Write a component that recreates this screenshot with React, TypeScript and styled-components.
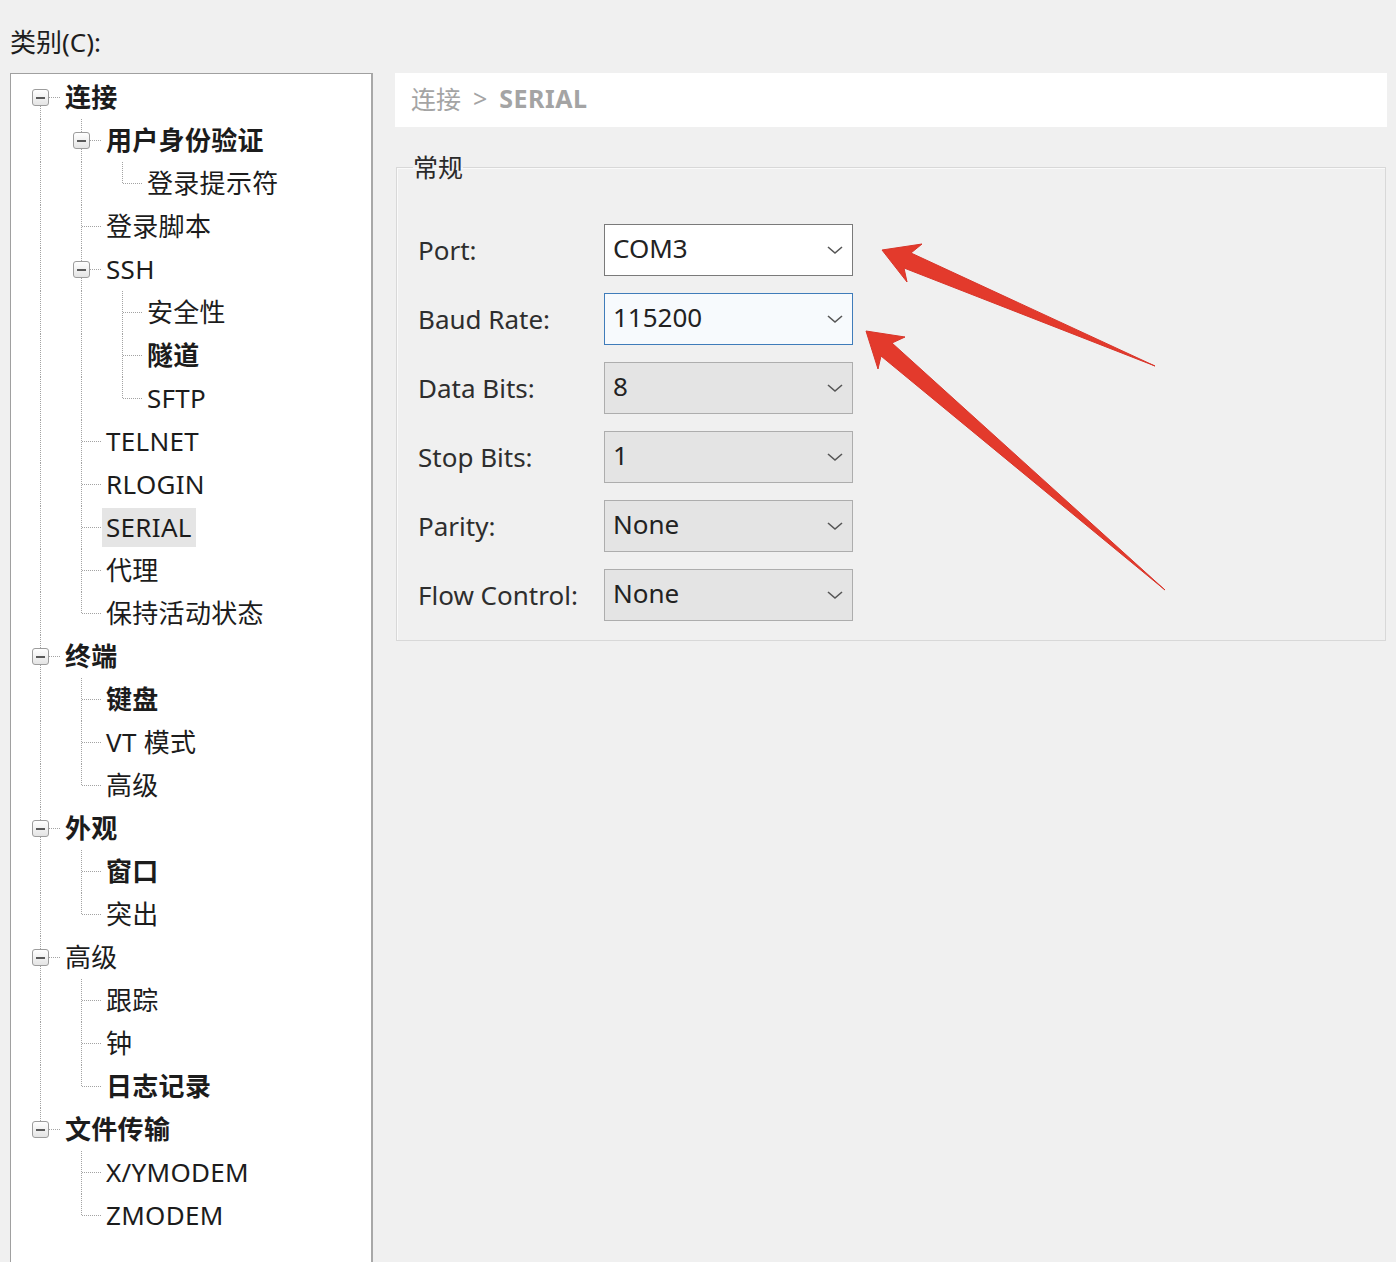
import React from "react";
import styled, { createGlobalStyle, css } from "styled-components";

const GlobalStyle = createGlobalStyle`
  html, body {
    margin: 0;
    padding: 0;
    overflow: hidden;
    background: #f0f0f0;
  }
  body {
    font-family: "Noto Sans", "Noto Sans CJK SC", sans-serif;
    color: #222;
  }
`;

type TreeNode = {
  label: string;
  bold?: boolean;
  selected?: boolean;
  children?: TreeNode[];
};

const TREE: TreeNode[] = [
  {
    label: "连接",
    bold: true,
    children: [
      { label: "用户身份验证", bold: true, children: [{ label: "登录提示符" }] },
      { label: "登录脚本" },
      {
        label: "SSH",
        children: [{ label: "安全性" }, { label: "隧道", bold: true }, { label: "SFTP" }],
      },
      { label: "TELNET" },
      { label: "RLOGIN" },
      { label: "SERIAL", selected: true },
      { label: "代理" },
      { label: "保持活动状态" },
    ],
  },
  {
    label: "终端",
    bold: true,
    children: [{ label: "键盘", bold: true }, { label: "VT 模式" }, { label: "高级" }],
  },
  {
    label: "外观",
    bold: true,
    children: [{ label: "窗口", bold: true }, { label: "突出" }],
  },
  {
    label: "高级",
    children: [{ label: "跟踪" }, { label: "钟" }, { label: "日志记录", bold: true }],
  },
  {
    label: "文件传输",
    bold: true,
    children: [{ label: "X/YMODEM" }, { label: "ZMODEM" }],
  },
];

type FlatRow = {
  node: TreeNode;
  depth: number;
  guides: boolean[];
  hasPrev: boolean;
  hasNext: boolean;
};

function flatten(nodes: TreeNode[], depth: number, guides: boolean[], out: FlatRow[]) {
  nodes.forEach((node, i) => {
    const hasNext = i < nodes.length - 1;
    const hasPrev = depth > 0 || i > 0;
    out.push({ node, depth, guides, hasPrev, hasNext });
    if (node.children) flatten(node.children, depth + 1, [...guides, hasNext], out);
  });
  return out;
}

const ROWS = flatten(TREE, 0, [], []);

const DOT = "#a3a3a3";
const vDots = `repeating-linear-gradient(to bottom, ${DOT} 0 1px, transparent 1px 2px)`;
const hDots = `repeating-linear-gradient(to right, ${DOT} 0 1px, transparent 1px 2px)`;

const Page = styled.div`
  position: relative;
  width: 1396px;
  height: 1262px;
  padding: 25px 8px 0 10px;
  box-sizing: border-box;
  overflow: hidden;
`;

const Caption = styled.div`
  font-size: 26px;
  line-height: 34px;
  color: #1e1e1e;
  margin-bottom: 14px;
`;

const Body = styled.div`
  display: flex;
  align-items: flex-start;
  gap: 22px;
`;

const TreeBox = styled.div`
  width: 363px;
  height: 1240px;
  box-sizing: border-box;
  background: #fff;
  border: 1px solid #a0a0a0;
  border-right: 2px solid #a8a8a8;
  padding: 2px 0 0 9px;
  flex-shrink: 0;
`;

const Row = styled.div`
  display: flex;
  align-items: center;
  height: 43px;
`;

const Guide = styled.div<{ $line: boolean }>`
  width: 41px;
  height: 100%;
  flex-shrink: 0;
  ${(p) =>
    p.$line &&
    css`
      background: ${vDots} 50% 0 / 1px 100% no-repeat;
    `}
`;

const Connector = styled.div<{ $top: boolean; $bottom: boolean }>`
  width: 41px;
  height: 100%;
  flex-shrink: 0;
  display: flex;
  align-items: center;
  justify-content: center;
  background: ${(p) => {
    const v = p.$top && p.$bottom
      ? `${vDots} 50% 0 / 1px 100% no-repeat`
      : p.$top
      ? `${vDots} 50% 0 / 1px 50% no-repeat`
      : `${vDots} 50% 100% / 1px 50% no-repeat`;
    return `${hDots} 100% 50% / 50% 1px no-repeat, ${v}`;
  }};
`;

const Expander = styled.div`
  width: 17px;
  height: 17px;
  box-sizing: border-box;
  border: 1px solid #9c9c9c;
  border-radius: 3px;
  background: linear-gradient(#ffffff, #e4e4e4);
  display: flex;
  align-items: center;
  justify-content: center;
  margin-left: -1px;

  &::before {
    content: "";
    width: 9px;
    height: 2px;
    background: #5a5a5a;
  }
`;

const NodeLabel = styled.span<{ $bold?: boolean; $selected?: boolean }>`
  font-size: 26px;
  line-height: 39px;
  padding: 0 4px;
  white-space: nowrap;
  letter-spacing: 0.3px;
  color: #1c1c1c;
  font-weight: ${(p) => (p.$bold ? 700 : 400)};
  background: ${(p) => (p.$selected ? "#e5e5e5" : "transparent")};
`;

const RightPanel = styled.div`
  width: 993px;
  display: flex;
  flex-direction: column;
`;

const PathBar = styled.div`
  height: 54px;
  box-sizing: border-box;
  padding: 0 0 5px 16px;
  background: #fff;
  display: flex;
  align-items: center;
  font-size: 25px;
  color: #a4a4a4;
  margin-right: 1px;
`;

const PathSep = styled.span`
  margin: 0 12px;
`;

const PathCurrent = styled.span`
  font-weight: 700;
  letter-spacing: 0.5px;
`;

const GroupBox = styled.fieldset`
  margin: 23px 2px 0 1px;
  padding: 0 0 19px 16px;
  border: 1px solid #d8d8d8;
  box-shadow: inset 1px 1px 0 #fafafa;
  min-width: 0;
`;

const GroupTitle = styled.legend`
  padding: 0;
  font-size: 25px;
  line-height: 34px;
  color: #2a2a2a;
`;

const FormGrid = styled.div`
  display: grid;
  grid-template-columns: 186px 249px;
  row-gap: 17px;
  margin: 40px 0 0 5px;
`;

const FieldLabel = styled.label`
  font-size: 26px;
  color: #2e2e2e;
  display: flex;
  align-items: center;
  white-space: nowrap;
`;

type SelectVariant = "plain" | "focus" | "disabled";

const SelectBox = styled.div<{ $variant: SelectVariant }>`
  height: 52px;
  box-sizing: border-box;
  display: flex;
  align-items: center;
  justify-content: space-between;
  padding: 0 8px 0 8px;
  font-size: 26px;
  color: #222;
  ${(p) =>
    p.$variant === "plain"
      ? css`
          background: #fff;
          border: 1px solid #7a7a7a;
        `
      : p.$variant === "focus"
      ? css`
          background: #f7fafd;
          border: 1px solid #3f7cba;
        `
      : css`
          background: #e4e4e4;
          border: 1px solid #adadad;
        `}
`;

const SelectValue = styled.span`
  line-height: 1;
  margin-top: -5px;
`;

const Chevron = () => (
  <svg width="18" height="10" viewBox="0 0 18 10" aria-hidden>
    <path d="M2 2 L9 8 L16 2" fill="none" stroke="#555" strokeWidth="1.6" />
  </svg>
);

const Annotations = styled.svg`
  position: absolute;
  left: 0;
  top: 0;
  pointer-events: none;
`;

const FIELDS: { label: string; value: string; variant: SelectVariant }[] = [
  { label: "Port:", value: "COM3", variant: "plain" },
  { label: "Baud Rate:", value: "115200", variant: "focus" },
  { label: "Data Bits:", value: "8", variant: "disabled" },
  { label: "Stop Bits:", value: "1", variant: "disabled" },
  { label: "Parity:", value: "None", variant: "disabled" },
  { label: "Flow Control:", value: "None", variant: "disabled" },
];

export default function App() {
  return (
    <>
      <GlobalStyle />
      <Page>
        <Caption>类别(C):</Caption>
        <Body>
          <TreeBox>
            {ROWS.map((r, i) => (
              <Row key={i}>
                {r.guides.map((g, j) => (
                  <Guide key={j} $line={g} />
                ))}
                <Connector $top={r.hasPrev} $bottom={r.hasNext}>
                  {r.node.children && <Expander />}
                </Connector>
                <NodeLabel $bold={r.node.bold} $selected={r.node.selected}>
                  {r.node.label}
                </NodeLabel>
              </Row>
            ))}
          </TreeBox>
          <RightPanel>
            <PathBar>
              连接<PathSep>&gt;</PathSep>
              <PathCurrent>SERIAL</PathCurrent>
            </PathBar>
            <GroupBox>
              <GroupTitle>常规</GroupTitle>
              <FormGrid>
                {FIELDS.map((f) => (
                  <React.Fragment key={f.label}>
                    <FieldLabel>{f.label}</FieldLabel>
                    <SelectBox $variant={f.variant}>
                      <SelectValue>{f.value}</SelectValue>
                      <Chevron />
                    </SelectBox>
                  </React.Fragment>
                ))}
              </FormGrid>
            </GroupBox>
          </RightPanel>
        </Body>
        <Annotations width="1396" height="1262" viewBox="0 0 1396 1262">
          <polygon
            points="882,250 922,244 911,253 1155,366 904,268 907,282"
            fill="#e33a2c"
            stroke="#d8352a"
            strokeWidth="1"
            strokeLinejoin="round"
          />
          <polygon
            points="866,331 905,337 892,343 1165,590 881,356 878,369"
            fill="#e33a2c"
            stroke="#d8352a"
            strokeWidth="1"
            strokeLinejoin="round"
          />
        </Annotations>
      </Page>
    </>
  );
}
